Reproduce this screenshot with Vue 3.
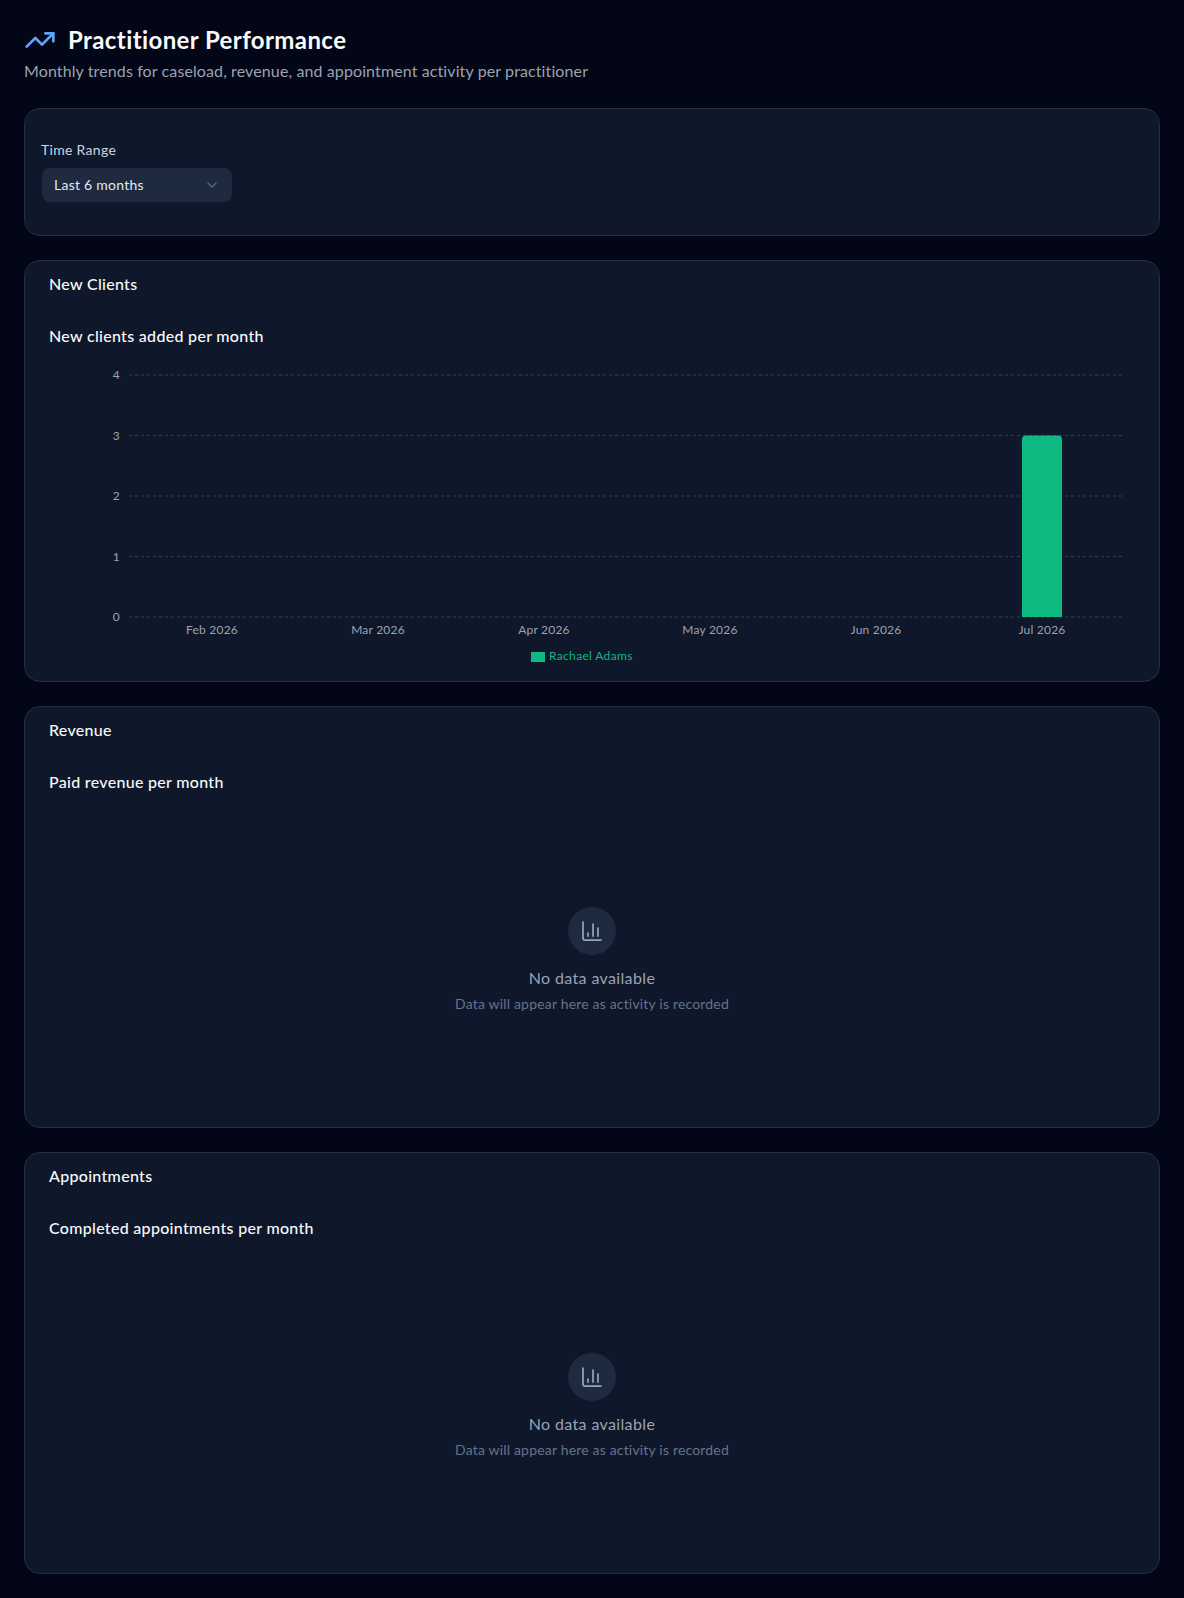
<script setup>
const ticks = [
  { v: 4, y: 26 },
  { v: 3, y: 86.5 },
  { v: 2, y: 147 },
  { v: 1, y: 207.5 },
  { v: 0, y: 268 }
]
const months = ['Feb 2026', 'Mar 2026', 'Apr 2026', 'May 2026', 'Jun 2026', 'Jul 2026']
const bandWidth = 166
const plotLeft = 80
const emptyCards = [
  { title: 'Revenue', subtitle: 'Paid revenue per month' },
  { title: 'Appointments', subtitle: 'Completed appointments per month' }
]
</script>

<template>
  <div class="page">
    <header class="header">
      <div class="title-row">
        <svg class="trend" viewBox="0 0 24 24" fill="none" stroke="currentColor" stroke-width="2" stroke-linecap="round" stroke-linejoin="round">
          <polyline points="22 7 13.5 15.5 8.5 10.5 2 17" />
          <polyline points="16 7 22 7 22 13" />
        </svg>
        <h1>Practitioner Performance</h1>
      </div>
      <p class="lead">Monthly trends for caseload, revenue, and appointment activity per practitioner</p>
    </header>

    <section class="card filter-card">
      <div class="filter-label">Time Range</div>
      <div class="select">
        <span class="select-value">Last 6 months</span>
        <svg class="chev" viewBox="0 0 24 24" fill="none" stroke="currentColor" stroke-width="2" stroke-linecap="round" stroke-linejoin="round">
          <path d="m6 9 6 6 6-6" />
        </svg>
      </div>
    </section>

    <section class="card">
      <h2>New Clients</h2>
      <h3>New clients added per month</h3>
      <svg class="chart" width="1086" height="308">
        <g v-for="t in ticks" :key="t.v">
          <line :x1="plotLeft" x2="1074" :y1="t.y" :y2="t.y" class="grid" />
          <text x="71" :y="t.y + 4" text-anchor="end" class="axis">{{ t.v }}</text>
        </g>
        <path d="M973 268V90.5a4 4 0 0 1 4-4h32a4 4 0 0 1 4 4V268Z" fill="#10b981" />
        <text
          v-for="(m, i) in months"
          :key="m"
          :x="plotLeft + bandWidth * (i + 0.5)"
          y="285"
          text-anchor="middle"
          class="axis"
        >{{ m }}</text>
        <rect x="482" y="303" width="14" height="10" fill="#10b981" />
        <text x="500" y="311" class="legend">Rachael Adams</text>
      </svg>
    </section>

    <section v-for="c in emptyCards" :key="c.title" class="card">
      <h2>{{ c.title }}</h2>
      <h3>{{ c.subtitle }}</h3>
      <div class="empty">
        <div class="empty-icon">
          <svg viewBox="0 0 24 24" fill="none" stroke="currentColor" stroke-width="1.75" stroke-linecap="round" stroke-linejoin="round">
            <path d="M3 3v16a2 2 0 0 0 2 2h16" />
            <path d="M18 17V9" />
            <path d="M13 17V5" />
            <path d="M8 17v-3" />
          </svg>
        </div>
        <div class="empty-title">No data available</div>
        <div class="empty-sub">Data will appear here as activity is recorded</div>
      </div>
    </section>
  </div>
</template>

<style>
html, body { margin: 0; background: #020617; }
</style>

<style scoped>
.page {
  box-sizing: border-box;
  width: 1184px;
  min-height: 1598px;
  padding: 24px;
  background: #020617;
  font-family: Lato, "Noto Sans", sans-serif;
  color: #f8fafc;
  display: flex;
  flex-direction: column;
  gap: 24px;
}
.header { display: flex; flex-direction: column; gap: 3px; }
.title-row { display: flex; align-items: center; gap: 12px; height: 32px; }
.trend { width: 32px; height: 32px; color: #60a5fa; flex: none; }
h1 { margin: 0; font-size: 24px; line-height: 32px; font-weight: 700; letter-spacing: 0.4px; color: #f8fafc; }
.lead { margin: 0 0 1px; font-size: 16px; line-height: 24px; letter-spacing: 0.11px; color: #9ca3af; }
.card {
  box-sizing: border-box;
  height: 422px;
  border: 1px solid #252f42;
  border-radius: 16px;
  background: #0f172a;
  padding: 11px 24px 24px;
}
.filter-card { height: 128px; padding: 31px 16px 0; }
.filter-label { font-size: 14px; line-height: 20px; letter-spacing: 0.3px; color: #cbd5e1; margin-bottom: 8px; }
.select {
  box-sizing: border-box;
  width: 190px;
  height: 34px;
  margin-left: 1px;
  padding: 0 12px;
  border-radius: 8px;
  background: #1e2a40;
  display: flex;
  align-items: center;
  justify-content: space-between;
  font-size: 14px;
  letter-spacing: 0.25px;
  color: #e2e8f0;
}
.select-value { margin-top: -2px; }
.chev { width: 16px; height: 16px; color: #5b6678; }
h2 { margin: 0; font-size: 16px; line-height: 24px; font-weight: 500; letter-spacing: 0.3px; color: #f8fafc; }
h3 { margin: 28px 0 0; font-size: 16px; line-height: 24px; font-weight: 500; letter-spacing: 0.3px; color: #f8fafc; }
.chart { display: block; overflow: visible; margin-top: 1px; }
.grid { stroke: #334155; stroke-dasharray: 3 3; stroke-width: 1; }
.axis { font-size: 12px; letter-spacing: 0.22px; fill: #9ca3af; font-family: Lato, sans-serif; }
.legend { font-size: 12px; letter-spacing: 0.33px; fill: #10b981; font-family: Lato, sans-serif; }
.empty { height: 308px; box-sizing: border-box; padding-top: 113px; display: flex; flex-direction: column; align-items: center; }
.empty-icon {
  width: 48px; height: 48px; border-radius: 50%;
  background: #1e2a40; color: #94a3b8;
  display: flex; align-items: center; justify-content: center;
  margin-bottom: 11px;
}
.empty-icon svg { width: 24px; height: 24px; }
.empty-title { font-size: 16px; line-height: 24px; letter-spacing: 0.36px; color: #9aa3b2; margin-bottom: 4px; }
.empty-sub { font-size: 14px; line-height: 20px; letter-spacing: 0.18px; color: #64748b; }
</style>
